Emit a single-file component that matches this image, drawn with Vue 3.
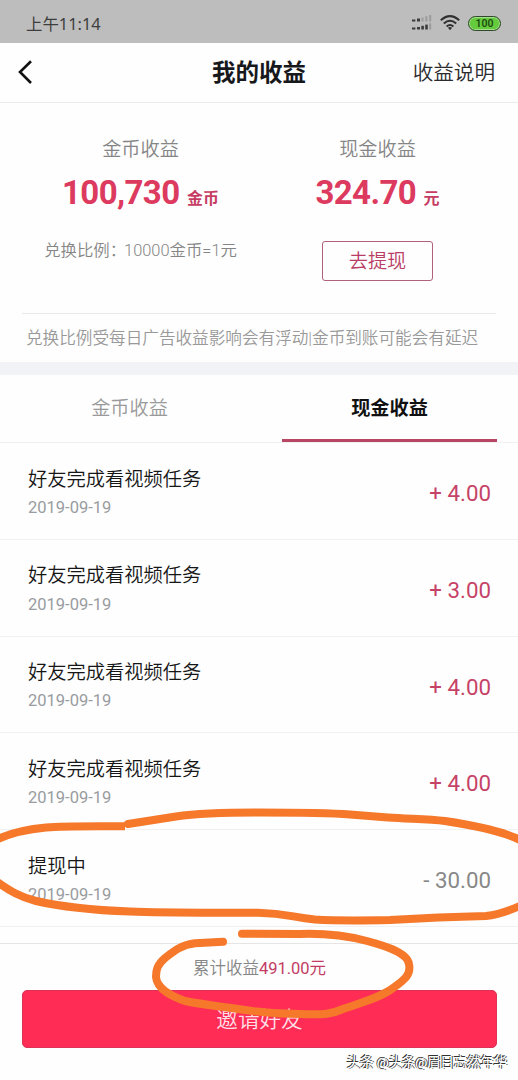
<script setup>
const records = [
  { title: '好友完成看视频任务', date: '2019-09-19', amount: '+ 4.00' },
  { title: '好友完成看视频任务', date: '2019-09-19', amount: '+ 3.00' },
  { title: '好友完成看视频任务', date: '2019-09-19', amount: '+ 4.00' },
  { title: '好友完成看视频任务', date: '2019-09-19', amount: '+ 4.00' },
  { title: '提现中', date: '2019-09-19', amount: '- 30.00', pending: true },
]
</script>

<template>
  <div class="screen">
    <div class="status">
      <span class="clock">上午11:14</span>
      <svg class="signal" width="20" height="16" viewBox="0 0 20 16">
        <g fill="#3c3c3c">
          <rect x="0" y="4.5" width="3.4" height="2" /><rect x="5" y="3.5" width="3" height="3" />
          <rect x="0" y="12.5" width="3.4" height="2" /><rect x="5" y="12" width="3" height="2.5" />
          <rect x="9.3" y="10.8" width="2.6" height="3.7" /><rect x="13.2" y="9.6" width="2.6" height="4.9" />
        </g>
        <g fill="#9c9c9c">
          <rect x="9.5" y="2.5" width="2" height="4" /><rect x="13.4" y="1.2" width="2" height="5.3" />
          <rect x="17.2" y="0" width="2" height="6.5" /><rect x="17.2" y="8.3" width="2" height="6.2" />
        </g>
      </svg>
      <svg class="wifi" width="20" height="16" viewBox="0 0 20 16">
        <g fill="none" stroke="#303030" stroke-width="2">
          <path d="M.8 5.3Q10-3 19.2 5.3" /><path d="M3.8 8.6Q10 3 16.2 8.6" /><path d="M6.6 11.5Q10 8.6 13.4 11.5" />
        </g>
        <path d="M7.9 12.8Q10 11.1 12.1 12.8L10 15.3Z" fill="#303030" />
      </svg>
      <span class="battery">100</span>
    </div>

    <header class="nav">
      <svg class="back" width="16" height="26" viewBox="0 0 16 26">
        <path d="M14 1.200 3 12 14 23" fill="none" stroke="#111" stroke-width="2.600" />
      </svg>
      <h1>我的收益</h1>
      <span class="help">收益说明</span>
    </header>

    <section class="summary">
      <div class="col coins">
        <div class="label">金币收益</div>
        <div class="value"><b>100,730</b><i>金币</i></div>
        <div class="rate">兑换比例<span class="colon">：</span>10000金币=1元</div>
      </div>
      <div class="col cash">
        <div class="label">现金收益</div>
        <div class="value"><b>324.70</b><i>元</i></div>
        <button class="withdraw"><span>去提现</span></button>
      </div>
    </section>
    <p class="notice">兑换比例受每日广告收益影响会有浮动|金币到账可能会有延迟</p>
    <div class="gap"></div>

    <nav class="tabs">
      <span class="tab">金币收益</span>
      <span class="tab active">现金收益</span>
    </nav>

    <ul class="list">
      <li v-for="(r, i) in records" :key="i" class="row">
        <div class="info">
          <div class="title">{{ r.title }}</div>
          <div class="date">{{ r.date }}</div>
        </div>
        <span class="amount" :class="{ pending: r.pending }">{{ r.amount }}</span>
      </li>
    </ul>

    <footer class="footer">
      <div class="total">累计收益<em>491.00元</em></div>
      <button class="invite">邀请好友</button>
    </footer>

    <svg class="marks" width="518" height="1080" viewBox="0 0 518 1080">
      <g fill="none" stroke="#f5782b" stroke-width="8" stroke-linejoin="round">
        <path d="M-4 840C12 832 30 829 46 827.500C65 826 90 826.500 125 826.300" />
        <path stroke-linecap="round" d="M128 824L176 816.500C200 813 225 812.500 258 812.500C300 812.500 325 812.500 350 814.500L388 817.500C410 819 428 819 445 821C465 824 502 830 522 841" />
        <path d="M-4 881C10 891 20 897 36 901C62 907 90 910 130 911.500C165 913 210 912.500 258 912.800C288 913.500 292 917.500 315 919.500C340 921 365 920.500 390 920C420 918 455 916.500 486 916C500 914.500 511 910 522 905" />
        <path stroke-linecap="round" d="M223 941.700L195 943.300C181 945 174 951 165 958C157 965 156 970 156 977C157 990 174 997 185 1001C205 1005 225 1007 245 1010C265 1013 280 1014 300 1014C325 1015 332 1014 343 1009C360 1003 380 998 393 988C406 979 411 974 409 964C407 952 382 945 367 941C340 934 315 933.500 300 934L242 933.800" />
      </g>
    </svg>
    <div class="credit">头条 @头条@眉目忘然年华</div>
  </div>
</template>

<style>
body { margin: 0; background: #fefefe; }
</style>

<style scoped>
.screen {
  position: relative;
  width: 518px;
  height: 1080px;
  overflow: hidden;
  background: #fefefe;
  font-family: Roboto, "Noto Sans CJK SC", sans-serif;
  display: flex;
  flex-direction: column;
}
.screen * { box-sizing: border-box; }
.status {
  height: 43px;
  flex: none;
  background: #bdbdbd;
  display: flex;
  align-items: center;
  padding: 3px 17px 0 26px;
}
.clock {
  flex: 1;
  padding-top: 2px;
  font: 400 16.4px/24px "Noto Sans", "Noto Sans CJK SC", sans-serif;
  color: #3d3d3d;
}
.signal { margin-right: 8px; }
.wifi { margin-right: 8px; }
.battery {
  width: 33px;
  height: 15px;
  border: 1.5px solid #2f4a28;
  border-radius: 8px;
  background: #63cb3c;
  box-shadow: inset 0 0 0 1px #a6dc8f;
  color: #1d4a10;
  font-size: 10.5px;
  font-weight: 600;
  line-height: 13px;
  text-align: center;
}
.nav {
  height: 60px;
  flex: none;
  border-bottom: 1px solid #ececec;
  display: grid;
  grid-template-columns: 195px auto 1fr;
  align-items: center;
  padding: 0 23px 0 17px;
}
.nav h1 {
  margin: 0;
  font-size: 23.5px;
  line-height: 34px;
  font-weight: 700;
  color: #17181c;
}
.help {
  justify-self: end;
  padding-top: 1px;
  font-size: 20.6px;
  line-height: 30px;
  color: #2b2b2e;
  font-weight: 350;
}
.summary {
  height: 211px;
  flex: none;
  margin: 0 22px;
  display: flex;
  border-bottom: 1px solid #e8e8e8;
}
.col {
  width: 237px;
  display: flex;
  flex-direction: column;
  align-items: center;
  padding-top: 33px;
}
.label {
  font-size: 19.2px;
  line-height: 28px;
  font-weight: 350;
  color: #858585;
}
.value {
  display: flex;
  align-items: baseline;
  height: 38px;
  margin-top: 10px;
  line-height: 38px;
  color: #dc3a5e;
  white-space: nowrap;
}
.value b { font-size: 33px; font-weight: 700; letter-spacing: -0.6px; }
.value i { font-style: normal; font-size: 16px; font-weight: 600; margin-left: 7.5px; color: #c63d63; }
.rate {
  margin-top: 27px;
  font-size: 16.4px;
  line-height: 24px;
  font-weight: 350;
  color: #858585;
}
.colon { margin: 0 -2px 0 0; }
.withdraw {
  width: 111px;
  height: 40px;
  margin-top: 29px;
  border: 1px solid #b0627c;
  border-radius: 3px;
  background: transparent;
  padding: 2px 0 0;
  font: 350 19.2px/36px Roboto, "Noto Sans CJK SC", sans-serif;
  color: #b83c63;
}
.notice {
  height: 48px;
  flex: none;
  margin: 0;
  padding: 1px 0 0 26px;
  font-size: 16.62px;
  line-height: 48px;
  font-weight: 350;
  color: #999;
  white-space: nowrap;
}
.gap { height: 13px; flex: none; background: #f2f3f6; }
.tabs {
  height: 68px;
  flex: none;
  padding: 0 21px 0 22px;
  border-bottom: 1px solid #f1f1f1;
  display: flex;
  justify-content: space-between;
}
.tab {
  width: 215px;
  height: 67px;
  line-height: 68px;
  text-align: center;
  font-size: 19.2px;
  font-weight: 350;
  color: #999;
}
.tab.active { font-weight: 700; color: #111; border-bottom: 3px solid #b94564; }
.list { list-style: none; margin: 0; padding: 0; height: 500px; flex: none; }
.row {
  height: 96.8px;
  border-bottom: 1px solid #f1f1f1;
  padding: 0 27px 0 28px;
  display: flex;
  justify-content: space-between;
}
.info { padding-top: 22.5px; }
.title { font-size: 19.25px; line-height: 28px; color: #161616; font-weight: 350; }
.date { font-size: 16.5px; line-height: 22px; margin-top: 3.3px; color: #999ca0; }
.amount { font-size: 22.3px; line-height: 100px; color: #c64367; }
.amount.pending { color: #888; }
.footer {
  flex: 1;
  border-top: 1px solid #e5e5e5;
  padding: 0 21px 0 22px;
  text-align: center;
}
.total { height: 46px; font-size: 16.5px; line-height: 49px; font-weight: 350; color: #858585; }
.total em { font-style: normal; font-weight: 400; color: #c23c63; }
.invite {
  display: block;
  width: 475px;
  height: 58px;
  border: 1px solid #dd3155;
  border-radius: 5px;
  background: #ff2d55;
  padding: 1px 0 0;
  font: 350 21.6px/54px Roboto, "Noto Sans CJK SC", sans-serif;
  color: #ffdfe6;
}
.marks { position: absolute; left: 0; top: 0; pointer-events: none; }
.credit {
  position: absolute;
  right: 11px;
  bottom: 7px;
  font-size: 13.3px;
  line-height: 20px;
  white-space: nowrap;
  color: #fff;
  text-shadow: -1px -1px 0 #333, 1px 0 0 #333;
}
</style>
